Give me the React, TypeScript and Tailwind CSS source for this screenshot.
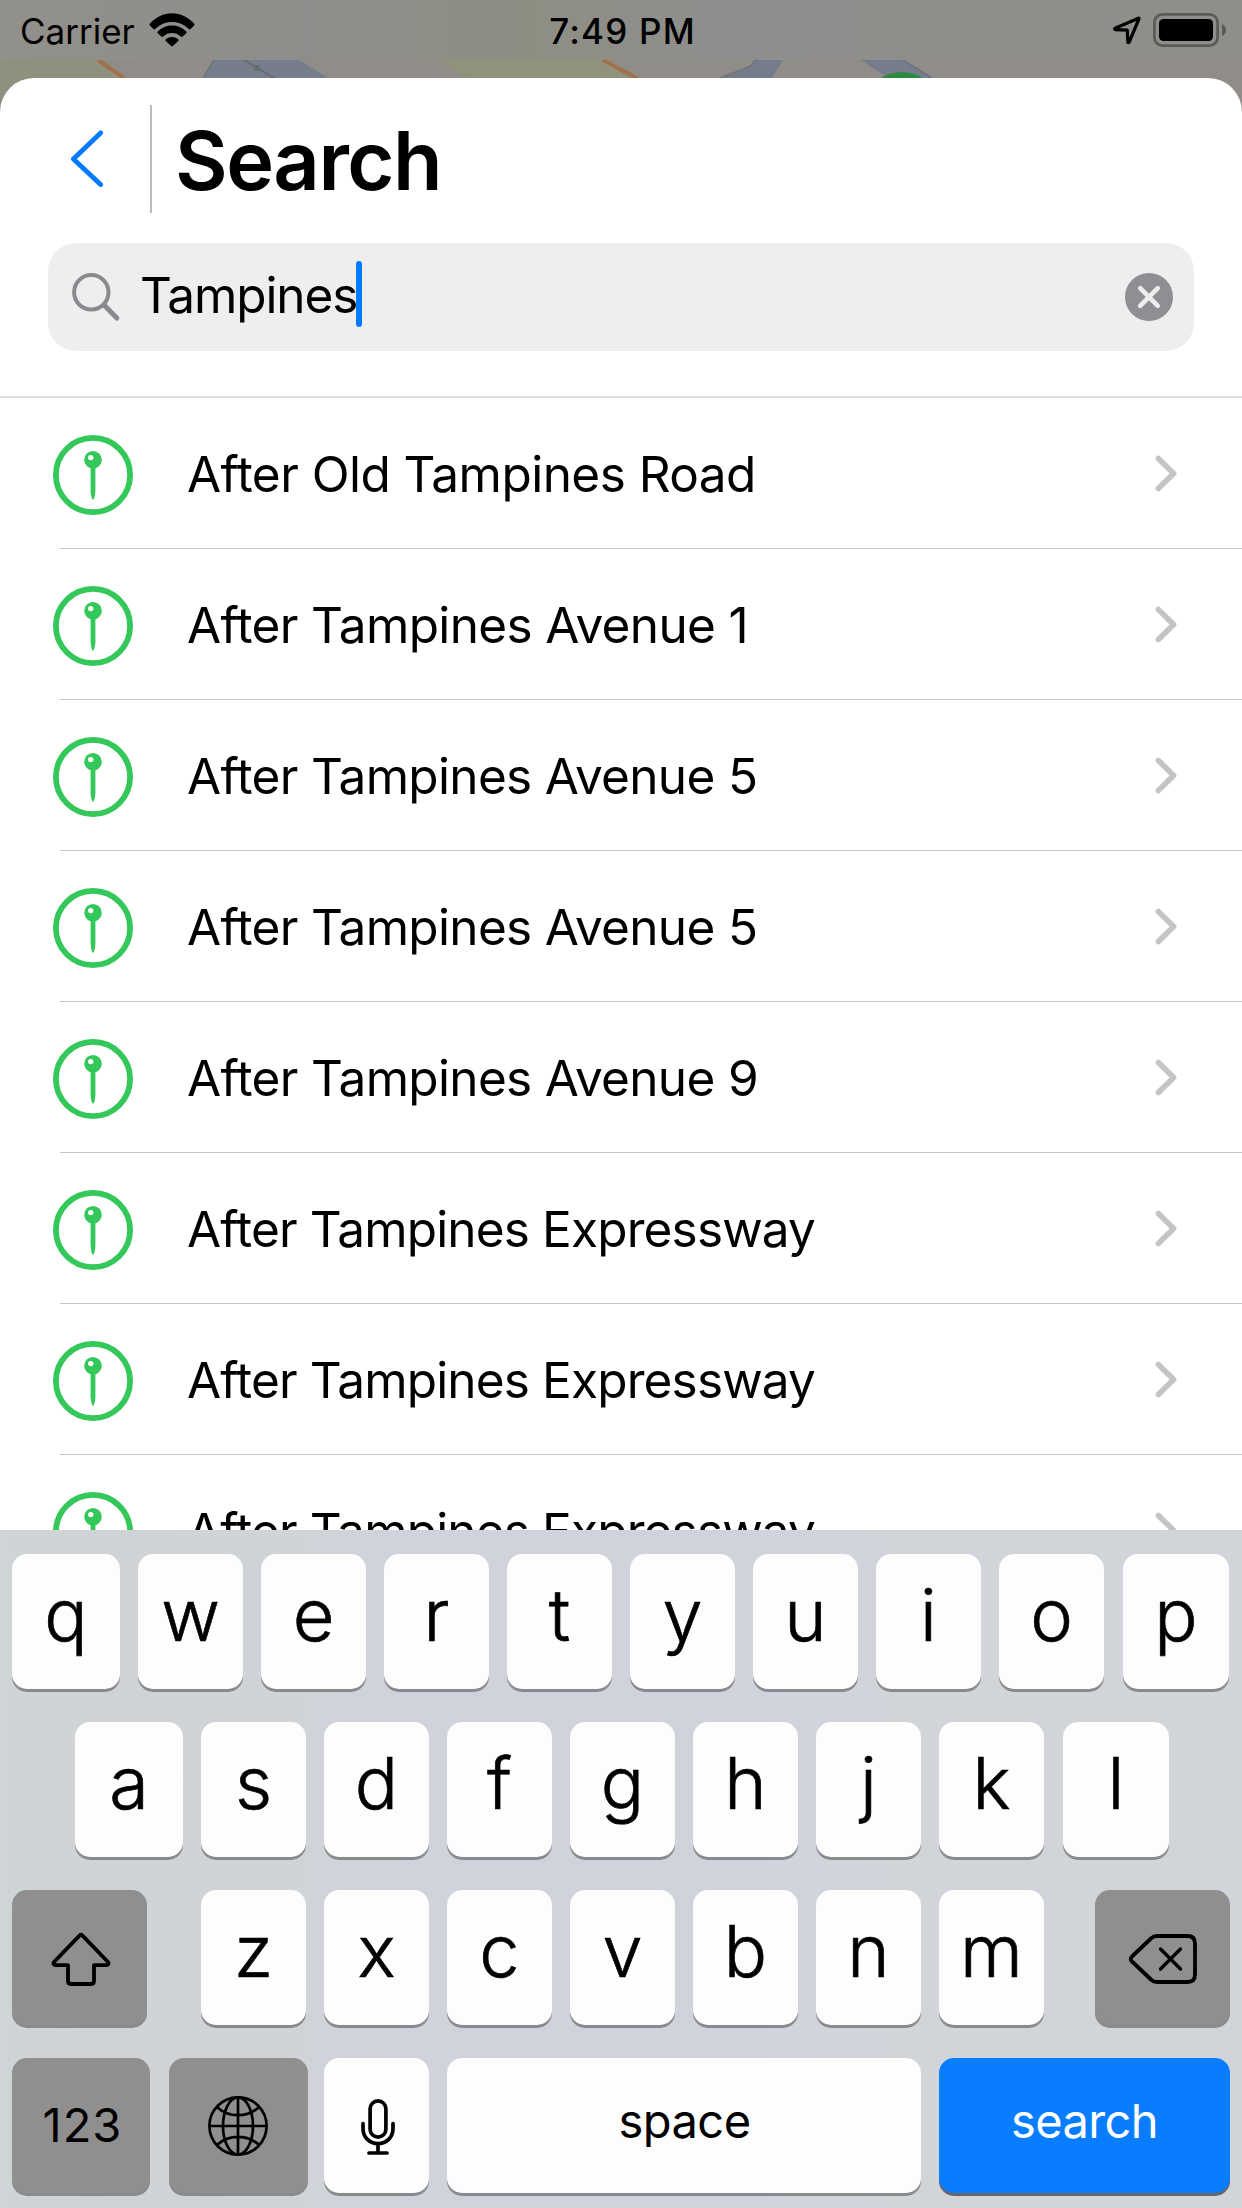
import type { ReactNode } from 'react';

type Stop = { name: string; tracking: string };

const STOPS: Stop[] = [
  { name: 'After Old Tampines Road', tracking: 'tracking-[-0.54px]' },
  { name: 'After Tampines Avenue 1', tracking: 'tracking-[-0.64px]' },
  { name: 'After Tampines Avenue 5', tracking: 'tracking-[-0.67px]' },
  { name: 'After Tampines Avenue 5', tracking: 'tracking-[-0.67px]' },
  { name: 'After Tampines Avenue 9', tracking: 'tracking-[-0.67px]' },
  { name: 'After Tampines Expressway', tracking: 'tracking-[-0.85px]' },
  { name: 'After Tampines Expressway', tracking: 'tracking-[-0.85px]' },
  { name: 'After Tampines Expressway', tracking: 'tracking-[-0.85px]' },
];

function MapBackdrop() {
  return (
    <svg className="absolute inset-0" width="1242" height="112" viewBox="0 0 1242 112" aria-hidden="true">
      <rect width="1242" height="112" fill="#908d88" />
      <path d="M0 60H97L124 78V112H0Z" fill="#8f917e" />
      <path d="M98 60L124 78" stroke="#a0714b" strokeWidth="4" />
      <path d="M214 60H299L328 78H203Z" fill="#767d8c" />
      <path d="M214 60L203 78" stroke="#70747e" strokeWidth="1.5" />
      <path d="M244 60L274 78" stroke="#696b70" strokeWidth="2" />
      <circle cx="257" cy="68" r="3" fill="#696b70" />
      <path d="M438 60H603L637 78H465Z" fill="#91927c" />
      <path d="M603 60L638 79" stroke="#a0714b" strokeWidth="4" />
      <path d="M755 60H783L772 78H720L751 66Z" fill="#757c8b" />
      <path d="M755 60L751 66L720 78" fill="none" stroke="#70737b" strokeWidth="1.5" />
      <path d="M861 60H903L932 78H889Z" fill="#757c8b" />
      <path d="M903 60L932 78" stroke="#70737b" strokeWidth="1.5" />
      <circle cx="902" cy="112" r="40" fill="#2b8a40" />
    </svg>
  );
}

function StatusBar() {
  return (
    <div className="relative flex h-[60px] items-center bg-[linear-gradient(90deg,#91908a_0%,#8e8d8b_25%,#8e8e83_43%,#8e8e8f_60%,#8f8e88_80%,#8f8e8b_100%)] text-[35px] leading-[40px] text-black">
      <div className="flex flex-1 items-center gap-[14px] pl-[20px]">
        <span className="pt-[2px]">Carrier</span>
        <svg width="46" height="34" viewBox="0 0 46 34">
          <path d="M0.9 12.6Q0 11.6 0.9 10.6C7 4 14.5 0.3 23 0.3S39 4 45.1 10.6Q46 11.6 45.1 12.6L41.6 16Q40.7 16.8 39.8 15.9C35 11.3 29.5 8.9 23 8.9S11 11.3 6.2 15.9Q5.3 16.8 4.4 16Z" />
          <path d="M8.8 20.3Q7.9 19.3 8.8 18.4C13 14.6 17.5 12.6 23 12.6S33 14.6 37.2 18.4Q38.1 19.3 37.2 20.3L33.7 23.4Q32.8 24.3 31.8 23.4C29.2 21.3 26.5 20.1 23 20.1S16.8 21.3 14.2 23.4Q13.2 24.3 12.3 23.4Z" />
          <path d="M16.7 28Q15.9 27.1 16.9 26.3C18.7 24.9 20.6 24.1 23 24.1S27.3 24.9 29.1 26.3Q30.1 27.1 29.3 28L23.8 33Q23 33.6 22.2 33Z" />
        </svg>
      </div>
      <span className="pt-[2px] pr-[2px] font-medium tracking-[1.2px]">7:49 PM</span>
      <div className="flex flex-1 items-center justify-end gap-[11px] pr-[15px]">
        <svg width="30" height="30" viewBox="0 0 30 30" fill="none" stroke="black" strokeWidth="3.2" strokeLinejoin="round">
          <path d="M26.5 3.2Q27.3 3.2 26.9 4.2L17.2 27Q16 28.2 15.8 27L15.3 15.2L3.3 14.6Q1.8 14 3 13.3Z" />
        </svg>
        <svg width="74" height="34" viewBox="0 0 74 34">
          <rect x="1.4" y="1.4" width="63.2" height="31.2" rx="8" fill="none" stroke="#5b5a57" strokeWidth="2.7" />
          <rect x="6" y="6" width="54" height="22" rx="4.5" />
          <path d="M69 11Q73 13 73 17T69 23Z" fill="#5b5a57" />
        </svg>
      </div>
    </div>
  );
}

function PinIcon() {
  return (
    <svg className="relative top-0.5 shrink-0" width="80" height="80" viewBox="0 0 80 80" fill="#34c759">
      <circle cx="40" cy="40" r="37.1" fill="none" stroke="#34c759" strokeWidth="5.8" />
      <circle cx="40" cy="24.8" r="8.8" />
      <path d="M37.6 31H42.4V56Q42 63 40 65Q38 63 37.6 56Z" />
      <circle cx="37.7" cy="22.6" r="2.7" fill="white" />
    </svg>
  );
}

function StopRow({ stop }: { stop: Stop }) {
  return (
    <li className="flex h-[151px] shrink-0 pl-[53px]">
      <div className="flex h-[150px] items-center">
        <PinIcon />
      </div>
      <div className="relative ml-[-73px] flex flex-1 items-center justify-between border-b border-[#c6c6c8] pl-[127px] pr-[64px]">
        <span className={`pt-0.5 text-[49.5px] leading-[60px] text-black ${stop.tracking}`}>{stop.name}</span>
        <svg width="23" height="37" viewBox="0 0 23 37" fill="none" stroke="#c4c4c6" strokeWidth="5.6" strokeLinecap="round" strokeLinejoin="round">
          <path d="M3.4 3.4L18.6 18.5L3.4 33.6" />
        </svg>
      </div>
    </li>
  );
}

function Key({ width, className = '', children }: { width: string; className?: string; children: ReactNode }) {
  return (
    <div className={`flex h-[135px] shrink-0 items-center justify-center rounded-[15px] ${width} ${className || 'bg-[#fdfdfd] shadow-[0_3px_0_#898a8d]'}`}>
      {children}
    </div>
  );
}

function Letters({ letters, first = 'w-[105px]', last = 'w-[105px]' }: { letters: string; first?: string; last?: string }) {
  return (
    <div className="flex gap-[18px]">
      {letters.split('').map((c, i) => (
        <Key key={c} width={i === 0 ? first : i === letters.length - 1 ? last : 'w-[105px]'}>
          <span className="pb-[13px] text-[72px] leading-[90px] font-light text-black [-webkit-text-stroke:0.7px_black]">{c}</span>
        </Key>
      ))}
    </div>
  );
}

const DARK_KEY = 'bg-[#8f8f8f] shadow-[0_3px_0_#898a8d]';

function Keyboard() {
  return (
    <div className="flex h-[678px] shrink-0 flex-col gap-[33px] bg-[linear-gradient(90deg,#cfd4d6_0%,#d0d3d8_25%,#d0d3dc_35%,#d0d3dc_60%,#d1d5da_72%,#d1d5da_100%)] pt-6 pl-3">
      <Letters letters="qwertyuiop" first="w-[108px]" last="w-[106px] ml-px" />
      <div className="flex pl-[63px]">
        <Letters letters="asdfghjkl" first="w-[108px]" last="w-[106px] ml-px" />
      </div>
      <div className="flex">
        <Key width="w-[135px]" className={DARK_KEY}>
          <svg className="mt-[3px] ml-[3px]" width="60" height="54" viewBox="0 0 60 54" fill="none" stroke="black" strokeWidth="3.8" strokeLinejoin="round">
            <path d="M28.7 3.4Q30 2.2 31.3 3.4L57 30Q58.5 32.6 55.5 33.2H43V49Q43 52 40 52H20Q17 52 17 49V33.2H4.5Q1.5 32.6 3 30Z" />
          </svg>
        </Key>
        <div className="pl-[54px]">
          <Letters letters="zxcvbnm" />
        </div>
        <div className="pl-[51px]">
          <Key width="w-[135px]" className={DARK_KEY}>
            <svg className="mt-[3px]" width="70" height="52" viewBox="0 0 70 52" fill="none" stroke="black" strokeWidth="3.8" strokeLinejoin="round" strokeLinecap="round">
              <path d="M29 3H59.5Q67 3 67 10.5V41.5Q67 49 59.5 49H29Q25.5 49 23.5 47L4 28.5Q1.5 26 4 23.5L23.5 5Q25.5 3 29 3Z" />
              <path d="M32.5 16L52.5 36M52.5 16L32.5 36" strokeWidth="3.4" />
            </svg>
          </Key>
        </div>
      </div>
      <div className="flex">
        <Key width="w-[138px]" className={DARK_KEY}>
          <span className="pb-px pl-[3px] text-[47px] leading-[60px] tracking-[1px] text-black">123</span>
        </Key>
        <div className="pl-[19px]">
          <Key width="w-[139px]" className={DARK_KEY}>
            <svg className="mr-px" width="60" height="60" viewBox="0 0 60 60" fill="none" stroke="black" strokeWidth="2.7">
              <circle cx="30" cy="30" r="28.6" />
              <ellipse cx="30" cy="30" rx="15" ry="28.6" />
              <path d="M30 1.4V58.6M1.4 30H58.6M9.5 11.5Q18 19.2 30 19.2T50.5 11.5M9.5 48.5Q18 40.8 30 40.8T50.5 48.5" />
            </svg>
          </Key>
        </div>
        <div className="pl-4">
          <Key width="w-[105px]">
            <svg className="mt-[3px] ml-0.5" width="36" height="58" viewBox="0 0 36 58" fill="none" stroke="black" strokeWidth="3.7" strokeLinecap="round">
              <rect x="10.1" y="2.9" width="15.8" height="36.2" rx="7.9" />
              <path d="M3 25.5V30.5C3 39.5 9.5 45.6 18 45.6S33 39.5 33 30.5V25.5M18 46V55M9 55H27" />
            </svg>
          </Key>
        </div>
        <div className="pl-[18px]">
          <Key width="w-[474px]">
            <span className="pb-[9px] pl-px text-[47px] leading-[60px] tracking-[-0.5px] text-black">space</span>
          </Key>
        </div>
        <div className="pl-[18px]">
          <Key width="w-[291px]" className="bg-[#097dff] shadow-[0_3px_0_#64666b]">
            <span className="pb-[9px] text-[47px] leading-[60px] tracking-[-0.6px] text-white">search</span>
          </Key>
        </div>
      </div>
    </div>
  );
}

export default function App() {
  return (
    <div className="flex h-[2208px] w-[1242px] flex-col overflow-hidden bg-white font-['Inter',sans-serif]">
      <header className="relative h-[112px] shrink-0">
        <MapBackdrop />
        <StatusBar />
      </header>
      <main className="relative mt-[-34px] flex min-h-0 flex-1 flex-col rounded-t-[34px] bg-white">
        <div className="mt-[27px] flex h-[108px] shrink-0 items-center">
          <button type="button" aria-label="Back" className="flex h-full w-[152px] items-center border-r-2 border-[#bcbcbe] pl-[70px]">
            <svg width="34" height="58" viewBox="0 0 34 58" fill="none" stroke="#007aff" strokeWidth="4.8" strokeLinecap="round" strokeLinejoin="round">
              <path d="M30.6 2.9L3.4 29L30.6 54.6" />
            </svg>
          </button>
          <h1 className="pt-[3px] pl-[23px] text-[81px] leading-[100px] font-semibold tracking-[-1.5px] text-black">Search</h1>
        </div>
        <div className="mx-12 mt-[30px] flex h-[108px] shrink-0 items-center rounded-[28px] bg-[#eeeeef] pr-[21px] pl-6">
          <svg width="48" height="48" viewBox="0 0 48 48" fill="none" stroke="#8a8a8e" strokeWidth="4" strokeLinecap="round">
            <circle cx="19.3" cy="19.3" r="17.2" />
            <path d="M32 32L44.8 45" strokeWidth="5" />
          </svg>
          <span className="pb-1 pl-5 text-[49.5px] leading-[60px] tracking-[-1.1px] text-black">Tampines</span>
          <span className="mb-[6px] ml-[-1px] h-[66px] w-[6px] rounded-full bg-[#007aff]" />
          <svg className="ml-auto" width="48" height="48" viewBox="0 0 48 48">
            <circle cx="24" cy="24" r="24" fill="#8e8e93" />
            <path d="M15.2 15.2L32.8 32.8M32.8 15.2L15.2 32.8" stroke="#eeeeef" strokeWidth="4.6" strokeLinecap="round" />
          </svg>
        </div>
        <ul className="mt-[45px] flex min-h-0 flex-1 flex-col overflow-hidden border-t-2 border-[#dddddd]">
          {STOPS.map((stop, i) => (
            <StopRow key={i} stop={stop} />
          ))}
        </ul>
      </main>
      <Keyboard />
    </div>
  );
}
